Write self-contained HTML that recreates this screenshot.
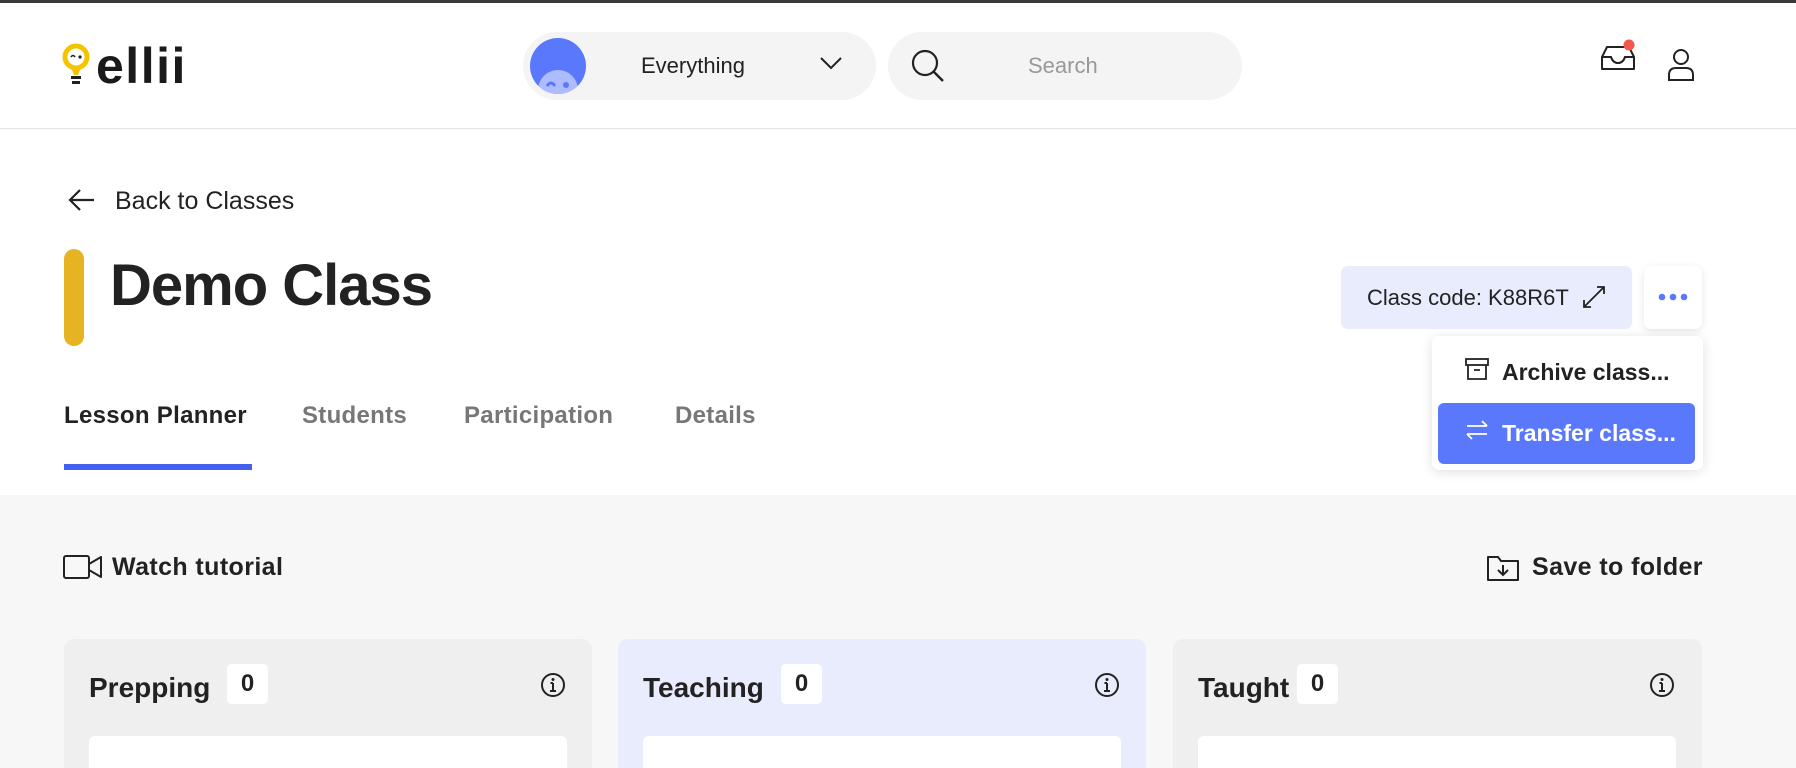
<!DOCTYPE html>
<html><head><meta charset="utf-8"><style>
*{box-sizing:border-box;margin:0;padding:0}
html{width:1796px;height:768px;overflow:hidden}
body{width:1796px;height:768px;overflow:hidden;background:#f7f7f7;font-family:"Liberation Sans","DejaVu Sans",sans-serif;color:#222;position:relative}
.abs{position:absolute}
#top{left:0;top:0;width:1796px;height:3px;background:#3a3a3a}
#hdr{left:0;top:3px;width:1796px;height:126px;background:#fff;border-bottom:1px solid #e6e6e6}
#white{left:0;top:130px;width:1796px;height:365px;background:#fff}
.pill{background:#f4f4f4;border-radius:34px;height:68px;top:32px}
.tab{top:402px;font-size:24px;font-weight:bold;color:#777}
.card{top:639px;height:129px;border-radius:10px 10px 0 0;overflow:hidden}
.badge{background:#fff;border-radius:5px;width:41px;height:40px;font-size:24px;font-weight:bold;text-align:center;line-height:40px;top:25px}
.ctitle{font-size:28px;font-weight:bold;top:33px}
.inner{background:#fff;border-radius:6px 6px 0 0;top:97px;height:32px}
</style></head><body>
<div id="top" class="abs"></div>
<div id="hdr" class="abs">
  <svg class="abs" style="left:62px;top:40px" width="30" height="46" viewBox="0 0 30 46"><circle cx="14" cy="14" r="11" fill="none" stroke="#f5c400" stroke-width="5"/><path d="M9 24 L12 32 L16 32 L19 24" fill="#f5c400"/><rect x="9" y="33" width="10" height="3" fill="#222"/><rect x="10" y="38" width="8" height="3" fill="#222"/><path d="M9 14 q2 -3 4 0" stroke="#222" stroke-width="1.6" fill="none"/><circle cx="18" cy="14" r="1.6" fill="#222"/></svg>
  <div class="abs" style="left:96px;top:34px;font-size:50px;font-weight:bold;color:#1a1a1a;letter-spacing:1.5px">ellii</div>
  <div class="abs pill" style="left:523px;width:353px;top:29px">
    <svg class="abs" style="left:7px;top:6px" width="56" height="56" viewBox="0 0 56 56"><circle cx="28" cy="28" r="28" fill="#5a78fb"/><clipPath id="c"><circle cx="28" cy="28" r="28"/></clipPath><circle cx="28" cy="52" r="20" fill="#aebcff" clip-path="url(#c)"/><path d="M17 48 q4 -6 8 0" stroke="#5a78fb" stroke-width="3" fill="none"/><circle cx="36" cy="47" r="3" fill="#5a78fb"/></svg>
    <div class="abs" style="left:118px;top:21px;font-size:22px;color:#222">Everything</div>
    <svg class="abs" style="left:296px;top:23px" width="24" height="16" viewBox="0 0 24 16"><path d="M2 3 L12 13 L22 3" stroke="#222" stroke-width="2" fill="none"/></svg>
  </div>
  <div class="abs pill" style="left:888px;width:354px;top:29px">
    <svg class="abs" style="left:22px;top:16px" width="36" height="36" viewBox="0 0 36 36"><circle cx="15" cy="15" r="12" stroke="#222" stroke-width="2.2" fill="none"/><path d="M24 24 L33 33" stroke="#222" stroke-width="2.4"/></svg>
    <div class="abs" style="left:140px;top:21px;font-size:22px;color:#999">Search</div>
  </div>
  <svg class="abs" style="left:1598px;top:32px" width="40" height="40" viewBox="0 0 40 40"><path d="M4 22 L9 12 H31 L36 22 V34 H4 Z" stroke="#222" stroke-width="2" fill="none" stroke-linejoin="round"/><path d="M4 22 H13 Q15 28 20 28 Q25 28 27 22 H36" stroke="#222" stroke-width="2" fill="none"/><circle cx="31" cy="10" r="5.5" fill="#f4574b"/></svg>
  <svg class="abs" style="left:1666px;top:44px" width="30" height="36" viewBox="0 0 30 36"><circle cx="15" cy="10" r="7" stroke="#222" stroke-width="2" fill="none"/><path d="M3 33 V28 Q3 21 10 21 H20 Q27 21 27 28 V33 Z" stroke="#222" stroke-width="2" fill="none"/></svg>
</div>
<div id="white" class="abs"></div>
<svg class="abs" style="left:68px;top:188px" width="28" height="24" viewBox="0 0 28 24"><path d="M26 12 H3 M12 2 L2 12 L12 22" stroke="#222" stroke-width="2.2" fill="none"/></svg>
<div class="abs" style="left:115px;top:187px;font-size:25px;color:#222">Back to Classes</div>
<div class="abs" style="left:64px;top:249px;width:20px;height:97px;background:#e6b422;border-radius:10px"></div>
<div class="abs" style="left:110px;top:252px;font-size:58px;font-weight:bold;color:#222;letter-spacing:-1px">Demo Class</div>
<div class="abs" style="left:1341px;top:266px;width:291px;height:63px;background:#e9ecfc;border-radius:7px">
  <div class="abs" style="left:26px;top:19px;font-size:22px;color:#222">Class code: K88R6T</div>
  <svg class="abs" style="left:240px;top:18px" width="26" height="26" viewBox="0 0 26 26"><path d="M3 23 L23 3 M3 16 V23 H10 M16 3 H23 V10" stroke="#222" stroke-width="1.8" fill="none"/></svg>
</div>
<div class="abs" style="left:1644px;top:266px;width:58px;height:63px;background:#fff;border-radius:7px;box-shadow:0 2px 8px rgba(0,0,0,.1)">
  <svg class="abs" style="left:14px;top:27px" width="30" height="8"><circle cx="4" cy="4" r="3.3" fill="#5a78fb"/><circle cx="15" cy="4" r="3.3" fill="#5a78fb"/><circle cx="26" cy="4" r="3.3" fill="#5a78fb"/></svg>
</div>
<div class="abs" style="left:1432px;top:336px;width:271px;height:134px;background:#fff;border-radius:7px;box-shadow:0 2px 12px rgba(0,0,0,.12)">
  <svg class="abs" style="left:33px;top:22px" width="24" height="22" viewBox="0 0 24 22"><rect x="1" y="1" width="22" height="6" stroke="#222" stroke-width="1.8" fill="none"/><path d="M3 7 V21 H21 V7 M9 12 H15" stroke="#222" stroke-width="1.8" fill="none"/></svg>
  <div class="abs" style="left:70px;top:23px;font-size:23px;font-weight:bold;color:#222">Archive class...</div>
  <div class="abs" style="left:6px;top:67px;width:257px;height:61px;background:#5a78fb;border-radius:6px">
    <svg class="abs" style="left:27px;top:17px" width="24" height="20" viewBox="0 0 24 20"><path d="M2 6 H22 M17 1 L22 6 M22 14 H2 M7 19 L2 14" stroke="#fff" stroke-width="1.8" fill="none"/></svg>
    <div class="abs" style="left:64px;top:17px;font-size:23px;font-weight:bold;color:#fff">Transfer class...</div>
  </div>
</div>
<div class="abs tab" style="left:64px;color:#222;letter-spacing:0.3px">Lesson Planner</div>
<div class="abs" style="left:64px;top:464px;width:188px;height:6px;background:#4361ee"></div>
<div class="abs tab" style="left:302px;letter-spacing:0.3px">Students</div>
<div class="abs tab" style="left:464px;letter-spacing:0.3px">Participation</div>
<div class="abs tab" style="left:675px;letter-spacing:0.3px">Details</div>
<svg class="abs" style="left:63px;top:554px" width="40" height="26" viewBox="0 0 40 26"><rect x="1" y="2" width="25" height="22" rx="2" stroke="#222" stroke-width="2" fill="none"/><path d="M26 10 L38 3 V23 L26 16" stroke="#222" stroke-width="2" fill="none" stroke-linejoin="round"/></svg>
<div class="abs" style="left:112px;top:553px;font-size:25px;font-weight:bold;color:#222;letter-spacing:0.4px">Watch tutorial</div>
<svg class="abs" style="left:1486px;top:554px" width="34" height="28" viewBox="0 0 34 28"><path d="M2 3 H12 L15 7 H32 V26 H2 Z" stroke="#222" stroke-width="2" fill="none" stroke-linejoin="round"/><path d="M17 11 V21 M12 16 L17 21 L22 16" stroke="#222" stroke-width="2" fill="none"/></svg>
<div class="abs" style="left:1532px;top:553px;font-size:25px;font-weight:bold;color:#222;letter-spacing:0.4px">Save to folder</div>
<div class="abs card" style="left:64px;width:528px;background:#efefef">
  <div class="abs ctitle" style="left:25px">Prepping</div><div class="abs badge" style="left:163px">0</div>
  <svg class="abs" style="left:476px;top:33px" width="26" height="26" viewBox="0 0 26 26"><circle cx="13" cy="13" r="11" stroke="#222" stroke-width="2" fill="none"/><path d="M13 11 V19 M10 19 H16 M10.5 11 H13" stroke="#222" stroke-width="2"/><circle cx="13" cy="7.5" r="1.5" fill="#222"/></svg>
  <div class="abs inner" style="left:25px;width:478px"></div>
</div>
<div class="abs card" style="left:618px;width:528px;background:#e9ecfc">
  <div class="abs ctitle" style="left:25px">Teaching</div><div class="abs badge" style="left:163px">0</div>
  <svg class="abs" style="left:476px;top:33px" width="26" height="26" viewBox="0 0 26 26"><circle cx="13" cy="13" r="11" stroke="#222" stroke-width="2" fill="none"/><path d="M13 11 V19 M10 19 H16 M10.5 11 H13" stroke="#222" stroke-width="2"/><circle cx="13" cy="7.5" r="1.5" fill="#222"/></svg>
  <div class="abs inner" style="left:25px;width:478px"></div>
</div>
<div class="abs card" style="left:1173px;width:529px;background:#efefef">
  <div class="abs ctitle" style="left:25px">Taught</div><div class="abs badge" style="left:124px">0</div>
  <svg class="abs" style="left:476px;top:33px" width="26" height="26" viewBox="0 0 26 26"><circle cx="13" cy="13" r="11" stroke="#222" stroke-width="2" fill="none"/><path d="M13 11 V19 M10 19 H16 M10.5 11 H13" stroke="#222" stroke-width="2"/><circle cx="13" cy="7.5" r="1.5" fill="#222"/></svg>
  <div class="abs inner" style="left:25px;width:478px"></div>
</div>
</body></html>
